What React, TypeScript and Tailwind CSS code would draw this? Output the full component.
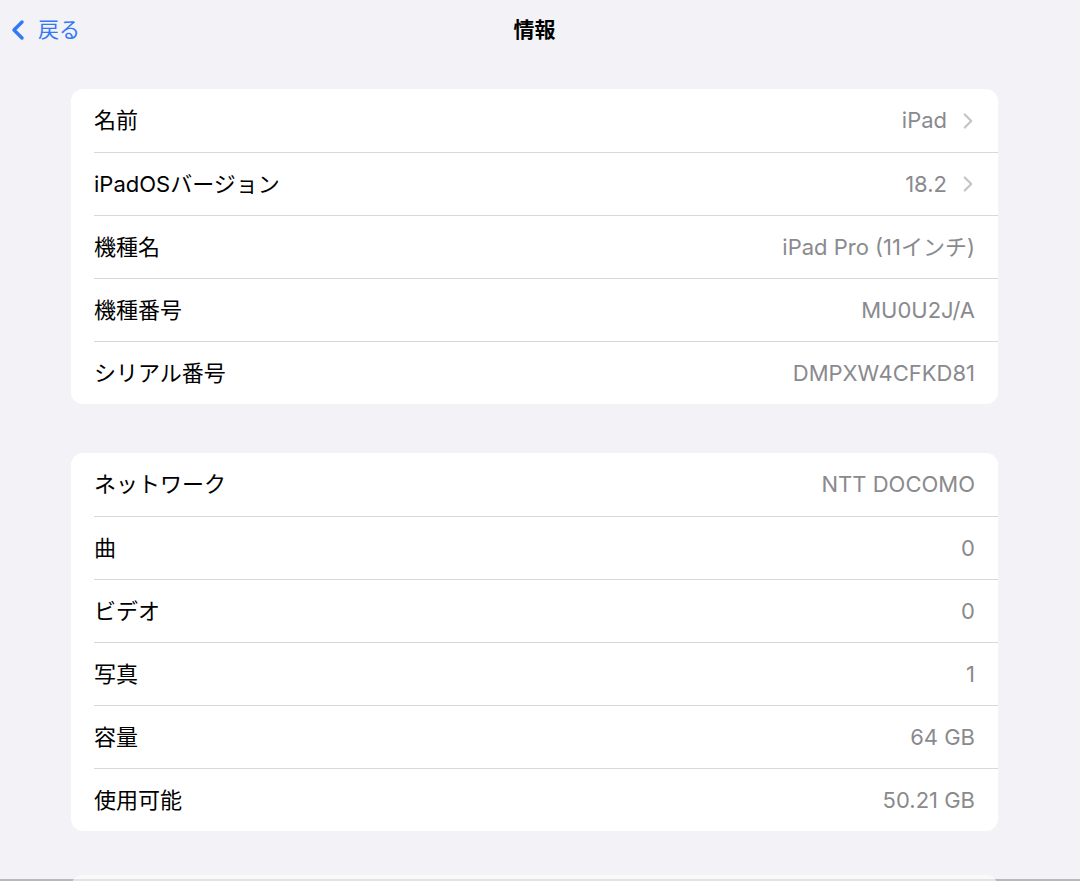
import { ChevronLeft, ChevronRight } from "lucide-react";

interface Row {
  label: string;
  value: string;
  link?: boolean;
}

const deviceRows: Row[] = [
  { label: "名前", value: "iPad", link: true },
  { label: "iPadOSバージョン", value: "18.2", link: true },
  { label: "機種名", value: "iPad Pro (11インチ)" },
  { label: "機種番号", value: "MU0U2J/A" },
  { label: "シリアル番号", value: "DMPXW4CFKD81" },
];

const mediaRows: Row[] = [
  { label: "ネットワーク", value: "NTT DOCOMO" },
  { label: "曲", value: "0" },
  { label: "ビデオ", value: "0" },
  { label: "写真", value: "1" },
  { label: "容量", value: "64 GB" },
  { label: "使用可能", value: "50.21 GB" },
];

function Group({ rows }: { rows: Row[] }) {
  return (
    <div className="bg-white rounded-xl overflow-hidden shrink-0">
      {rows.map((row, i) => (
        <div key={row.label} className="pl-[23px]">
          <div
            className={
              "h-[63px] flex items-center justify-between pr-[23px] " +
              (i > 0 ? "border-t border-[#d8d8dc]" : "")
            }
          >
            <span className="text-[22px] text-black">{row.label}</span>
            <span className="flex items-center text-[22px] text-[#8a8a8e]">
              {row.value}
              {row.link && (
                <ChevronRight className="ml-[8px] -mr-[6px] w-[26px] h-[26px] text-[#c4c4c7]" strokeWidth={2} />
              )}
            </span>
          </div>
        </div>
      ))}
    </div>
  );
}

export default function App() {
  return (
    <div
      className="w-[1080px] h-[881px] overflow-hidden bg-[#f2f2f7] flex flex-col"
      style={{ fontFamily: 'Inter, "Noto Sans CJK JP", sans-serif' }}
    >
      <header className="h-[60px] shrink-0 flex items-center relative pl-[71px] pr-[82px]">
        <div className="absolute left-[2px] top-[14px] flex items-center text-[#3478f6]">
          <ChevronLeft className="w-[32px] h-[32px]" strokeWidth={2.6} />
          <span className="text-[21px] ml-[4px]">戻る</span>
        </div>
        <h1 className="flex-1 text-center text-[21px] font-bold text-black">情報</h1>
      </header>
      <main className="flex-1 min-h-0 pl-[71px] pr-[82px] pt-[29px] flex flex-col gap-[49px]">
        <Group rows={deviceRows} />
        <div className="flex flex-col gap-[44px] shrink-0">
          <Group rows={mediaRows} />
          <div className="bg-white rounded-t-xl h-[20px] opacity-60" />
        </div>
      </main>
      <div className="h-[2px] bg-[#b8b8bc] shrink-0" />
    </div>
  );
}
